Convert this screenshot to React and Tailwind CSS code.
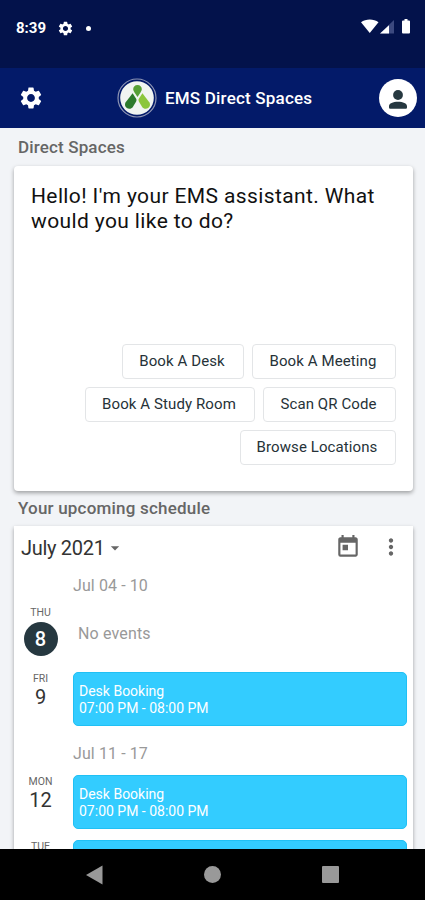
import React from "react";
import { MdArrowDropDown, MdMoreVert, MdSettings, MdToday } from "react-icons/md";

const actionRows = [
  [
    { label: "Book A Desk", width: "w-[122px]" },
    { label: "Book A Meeting", width: "w-[144px]" },
  ],
  [
    { label: "Book A Study Room", width: "w-[170px]" },
    { label: "Scan QR Code", width: "w-[133px]" },
  ],
  [{ label: "Browse Locations", width: "w-[156px]" }],
];

const Logo = () => (
  <svg viewBox="0 0 40 40" className="size-10 shrink-0">
    <circle cx="20" cy="20" r="19" fill="none" stroke="#8d94b3" strokeWidth="1.2" />
    <circle cx="20" cy="20" r="16.8" fill="#f0f4f1" />
    <path d="M20.500 7C18 7 16.200 8.900 16.200 11.100c0 1.300.6 2.300 1.300 3.400l3 4.500 3-4.500c.7-1.100 1.300-2.100 1.300-3.400C24.800 8.900 23 7 20.500 7z" fill="#56a036" />
    <path d="M15.600 15.200 19 20.500c.7 1.100.7 2 0 3.200l-3 5c-1.500 2.300-4.200 2.600-6.200 1.300-2-1.400-2.400-3.600-1.100-5.700z" fill="#2c7a2c" />
    <path d="M25.400 15.200 22 20.500c-.7 1.100-.7 2 0 3.200l3 5c1.500 2.300 4.200 2.600 6.200 1.300 2-1.400 2.400-3.600 1.100-5.700z" fill="#8bc63b" />
  </svg>
);

const StatusBar = () => (
  <div className="flex h-[68px] shrink-0 items-start bg-[#03124b] pl-4 pr-[14px] pt-[18px] text-white">
    <div className="flex h-5 items-center">
      <span className="w-[41px] text-[15px] font-bold">8:39</span>
      <MdSettings className="size-[17px]" />
      <span className="ml-[12px] size-[5px] rounded-full bg-white" />
    </div>
    <svg viewBox="0 0 50 16" className="ml-auto mt-[1px] h-4 w-[50px]">
      <path d="M0 3.2C4.8-.5 12.700-.5 17.500 3.200L8.750 14z" fill="#fff" />
      <path d="M33 1v13.500H19z" fill="#3c497f" />
      <path d="M28 6.200v8.300H19z" fill="#fff" />
      <path d="M42 1.500h1.500V0h3v1.500H48a1 1 0 0 1 1 1v11a1 1 0 0 1-1 1h-6a1 1 0 0 1-1-1v-11a1 1 0 0 1 1-1z" fill="#fff" />
    </svg>
  </div>
);

const Header = () => (
  <header className="flex h-[60px] shrink-0 items-center bg-[#031a69] pl-[18px] pr-2 text-white">
    <MdSettings className="size-[26px]" />
    <div className="ml-[73px] flex items-center gap-2">
      <Logo />
      <h1 className="pt-[2px] text-[17px] font-medium tracking-[0.2px]">EMS Direct Spaces</h1>
    </div>
    <div className="ml-auto flex size-[38px] items-center justify-center rounded-full bg-white">
      <svg viewBox="0 0 18 19" className="mt-[2px] h-[19px] w-[18px]" fill="#263840">
        <circle cx="9" cy="5" r="4.900" />
        <path d="M0 16.200c0-2.800 4-4.500 9-4.500s9 1.700 9 4.500v1.300a1.200 1.200 0 0 1-1.200 1.200H1.200A1.200 1.200 0 0 1 0 17.500z" />
      </svg>
    </div>
  </header>
);

const Day = ({ name, date, today }) => (
  <div className="flex w-[33px] shrink-0 flex-col items-center">
    <span className="text-[10.500px] leading-[14px] text-[#666]">{name}</span>
    {today ? (
      <span className="mt-[2px] flex size-[34px] items-center justify-center rounded-full bg-[#263840] text-xl font-medium text-white">
        {date}
      </span>
    ) : (
      <span className="-mt-[1px] text-[20px] leading-6 text-[#333]">{date}</span>
    )}
  </div>
);

const Booking = () => (
  <div className="h-[54px] w-[334px] shrink-0 rounded-[5px] border border-[#20c0f4] bg-[#33ccff] px-[5px] pt-[10px] text-[14px] leading-[16.500px] text-white">
    <p>Desk Booking</p>
    <p>07:00 PM - 08:00 PM</p>
  </div>
);

const App = () => {
  return (
    <div className="flex h-[900px] w-[425px] flex-col overflow-hidden bg-[#f2f4f7] font-['Roboto',sans-serif]">
      <StatusBar />
      <Header />

      <main className="min-h-0 flex-1 overflow-hidden pl-[14px] pr-3">
        <h2 className="flex h-[38px] items-center pl-1 pt-[2px] text-[17px] font-medium tracking-[0.150px] text-[#666]">
          Direct Spaces
        </h2>

        {/* Assistant */}
        <section className="flex h-[325px] flex-col justify-between rounded-[4px] bg-white pb-[26px] pl-[17px] pr-[17px] pt-[18px] shadow-[0_2px_4px_rgba(0,0,0,0.35)]">
          <p className="text-[21px] leading-[25px] tracking-[0.380px] text-[#111]">
            Hello! I'm your EMS assistant. What
            <br />
            would you like to do?
          </p>
          <div className="flex flex-col gap-2">
            {actionRows.map((row) => (
              <div key={row[0].label} className="flex justify-end gap-2">
                {row.map((action) => (
                  <button
                    key={action.label}
                    className={`h-[35px] rounded-[4px] border border-[#e3e5e7] pr-[2px] text-[15px] tracking-[0.100px] whitespace-nowrap text-[#263238] ${action.width}`}
                  >
                    {action.label}
                  </button>
                ))}
              </div>
            ))}
          </div>
        </section>

        <h2 className="flex h-[35px] items-center pl-1 text-[17px] font-medium tracking-[0.200px] text-[#666]">
          Your upcoming schedule
        </h2>

        {/* Schedule */}
        <section className="h-[400px] bg-white shadow-[0_2px_4px_rgba(0,0,0,0.35)]">
          <div className="flex h-[42px] items-center pl-[7px] pr-[9px] text-[#666]">
            <span className="pt-[2px] text-[20px] tracking-[-0.300px] text-[#333]">July 2021</span>
            <MdArrowDropDown className="mt-[1px] size-[20px]" />
            <MdToday className="ml-auto size-[26px]" />
            <MdMoreVert className="ml-[17px] size-[26px]" />
          </div>
          <p className="h-[38px] pl-[59px] pt-[6px] text-[16px] leading-6 tracking-[0.100px] text-[#999]">Jul 04 - 10</p>
          <div className="flex h-[66px] pl-[10px]">
            <Day name="THU" date="8" today />
            <p className="pl-[21px] pt-[16px] text-[16px] leading-6 tracking-[0.150px] text-[#999]">No events</p>
          </div>
          <div className="flex h-[68px] gap-4 pl-[10px]">
            <Day name="FRI" date="9" />
            <Booking />
          </div>
          <p className="h-[35px] pl-[59px] pt-[2px] text-[16px] leading-6 tracking-[0.100px] text-[#999]">Jul 11 - 17</p>
          <div className="flex h-[65px] gap-4 pl-[10px]">
            <Day name="MON" date="12" />
            <Booking />
          </div>
          <div className="flex gap-4 pl-[10px]">
            <Day name="TUE" date="13" />
            <Booking />
          </div>
        </section>
      </main>

      <nav className="flex h-[51px] shrink-0 items-center justify-between bg-black pl-[86px] pr-[86px]">
        <svg viewBox="0 0 17 20" className="h-5 w-[17px]">
          <path d="M0 10 16.500.500v19z" fill="#999" />
        </svg>
        <span className="size-[17px] rounded-full bg-[#999]" />
        <span className="size-[17px] rounded-[1px] bg-[#999]" />
      </nav>
    </div>
  );
};

export default App;
